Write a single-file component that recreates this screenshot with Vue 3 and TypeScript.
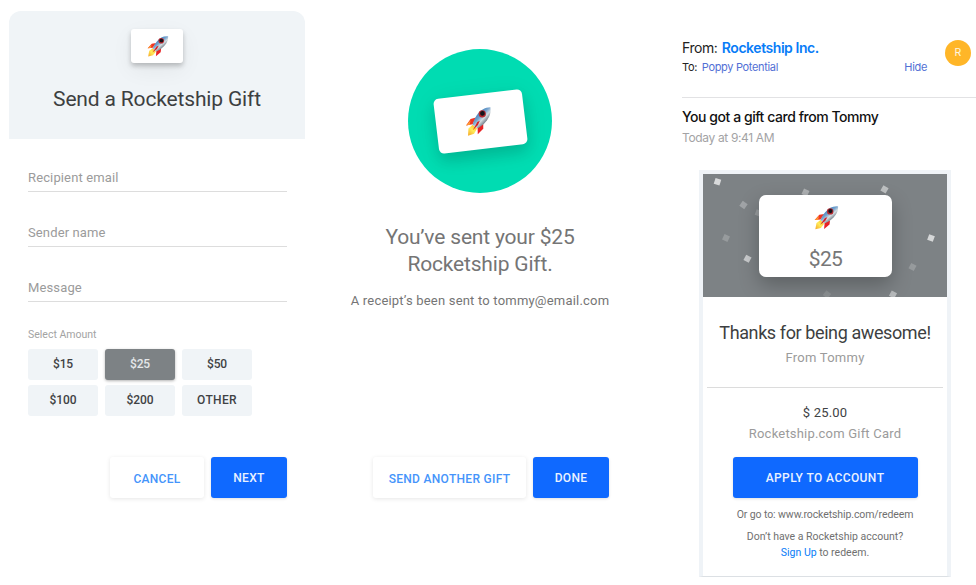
<script setup lang="ts">
import { ref, defineComponent, h } from 'vue'

interface Confetto {
  x: number
  y: number
  r: number
  o: number
}

const fields: string[] = ['Recipient email', 'Sender name', 'Message']
const amounts: string[] = ['$15', '$25', '$50', '$100', '$200', 'OTHER']
const selected = ref<string>('$25')

const confetti: Confetto[] = [
  { x: 14.5, y: 7.8, r: 18, o: 0.7 },
  { x: 40.5, y: 31, r: 35, o: 0.28 },
  { x: 55.5, y: 39, r: 20, o: 0.2 },
  { x: 102.5, y: 18.5, r: 25, o: 0.38 },
  { x: 181.5, y: 15.3, r: 30, o: 0.5 },
  { x: 23, y: 64, r: 25, o: 0.2 },
  { x: 44.5, y: 84.7, r: 28, o: 0.58 },
  { x: 228, y: 64, r: 20, o: 0.68 },
  { x: 209.5, y: 93, r: 28, o: 0.2 },
  { x: 124, y: 120.5, r: 38, o: 0.12 },
  { x: 190, y: 120.5, r: 28, o: 0.45 },
]

const Rocket = defineComponent({
  name: 'RocketIcon',
  setup: () => () =>
    h('svg', { viewBox: '0 0 24 24' }, [
      h('defs', [
        h('linearGradient', { id: 'hull', x1: 0.25, y1: 0.2, x2: 0.75, y2: 0.8 }, [
          h('stop', { offset: '0', 'stop-color': '#2f78b8' }),
          h('stop', { offset: '.38', 'stop-color': '#79a5cf' }),
          h('stop', { offset: '.6', 'stop-color': '#d5dee2' }),
          h('stop', { offset: '1', 'stop-color': '#465461' }),
        ]),
        h('linearGradient', { id: 'flame', x1: 1, y1: 0, x2: 0, y2: 1 }, [
          h('stop', { offset: '0', 'stop-color': '#ffb21c' }),
          h('stop', { offset: '.5', 'stop-color': '#ffec5a' }),
          h('stop', { offset: '1', 'stop-color': '#f5a524' }),
        ]),
      ]),
      h('path', { d: 'M9.8 8.1 4.8 8.8 0.2 14l5.9-.5z', fill: '#f03422' }),
      h('path', { d: 'M4.7 9.8.2 14l3.3-.3z', fill: '#ff9b32' }),
      h('path', { d: 'M15.5 14.5 15 18.6 9.6 23l.6-6.5z', fill: '#e82224' }),
      h('path', { d: 'M6 14 2 16.9.8 23.3l5.6-1.2 3.1-4.4z', fill: 'url(#flame)' }),
      h('path', { d: 'M23.6.4C18.5-.2 14.2 2 10.7 6.2 8.7 8.6 7.1 11.2 6 14l3.8 3.6c4.4-1.4 8.9-4.8 11.6-9 1.6-2.5 2.3-5.2 2.2-8.2z', fill: 'url(#hull)' }),
      h('path', { d: 'M12.8 11.2 10.5 12 5.6 18.8l5.1-3.9z', fill: '#d51f25' }),
      h('circle', { cx: 15.7, cy: 5.4, r: 3.2, fill: '#b6282e' }),
      h('circle', { cx: 15.9, cy: 5.1, r: 2.1, fill: '#14151c' }),
    ]),
})
</script>

<template>
  <main class="board">
    <section class="compose">
      <header class="compose-head">
        <div class="mini-card"><Rocket class="rocket-sm" /></div>
        <h1>Send a Rocketship Gift</h1>
      </header>
      <form class="form" @submit.prevent>
        <div v-for="f in fields" :key="f" class="field">{{ f }}</div>
        <div class="amount-label">Select Amount</div>
        <div class="amounts">
          <button
            v-for="a in amounts"
            :key="a"
            type="button"
            class="amount"
            :class="{ active: a === selected, word: a === 'OTHER' }"
            @click="selected = a"
          >{{ a }}</button>
        </div>
        <div class="actions">
          <button type="button" class="btn ghost cancel">CANCEL</button>
          <button type="button" class="btn primary">NEXT</button>
        </div>
      </form>
    </section>

    <section class="sent">
      <div class="disc"><div class="tilt-card"><Rocket class="rocket-md" /></div></div>
      <h2>You’ve sent your $25<br />Rocketship Gift.</h2>
      <p class="receipt">A receipt’s been sent to tommy@email.com</p>
      <div class="sent-actions">
        <button type="button" class="btn ghost another">SEND ANOTHER GIFT</button>
        <button type="button" class="btn primary">DONE</button>
      </div>
    </section>

    <section class="mail">
      <header class="mail-head">
        <div class="people">
          <div class="from">From: <b>Rocketship Inc.</b></div>
          <div class="to"><span>To: <a>Poppy Potential</a></span><a class="hide">Hide</a></div>
        </div>
        <div class="avatar">R</div>
      </header>
      <div class="subject">You got a gift card from Tommy</div>
      <div class="time">Today at 9:41 AM</div>

      <article class="gift">
        <div class="banner">
          <svg class="confetti" viewBox="0 0 244 123">
            <rect
              v-for="(c, i) in confetti"
              :key="i"
              :x="c.x - 3"
              :y="c.y - 3"
              width="6"
              height="6"
              fill="#fff"
              :fill-opacity="c.o"
              :transform="`rotate(${c.r} ${c.x} ${c.y})`"
            />
          </svg>
          <div class="value-card">
            <Rocket class="rocket-lg" />
            <span class="value">$25</span>
          </div>
        </div>
        <div class="gift-top">
          <div class="thanks">Thanks for being awesome!</div>
          <div class="sender">From Tommy</div>
        </div>
        <div class="gift-body">
          <div class="price">$ 25.00</div>
          <div class="product">Rocketship.com Gift Card</div>
          <button type="button" class="btn primary apply">APPLY TO ACCOUNT</button>
          <div class="small goto">Or go to: www.rocketship.com/redeem</div>
          <div class="small">Don’t have a Rocketship account?</div>
          <div class="small signup"><a>Sign Up</a> to redeem.</div>
        </div>
      </article>
    </section>
  </main>
</template>

<style>
body {
  background: #fff;
}
</style>

<style scoped>
* {
  box-sizing: border-box;
}
.board {
  width: 976px;
  height: 585px;
  overflow: hidden;
  display: grid;
  grid-template-columns: 296px 350px 321px;
  padding-left: 9px;
  font-family: Roboto, "Liberation Sans", sans-serif;
  white-space: nowrap;
  background: #fff;
}
h1,
h2,
p {
  margin: 0;
  font-weight: 400;
}
button {
  font: inherit;
  border: 0;
  padding: 0;
}
.compose {
  padding-top: 11px;
}
.compose-head {
  height: 128px;
  background: #f0f4f7;
  border-radius: 12px 12px 0 0;
  display: flex;
  flex-direction: column;
  align-items: center;
  padding-top: 18px;
}
.mini-card {
  width: 52px;
  height: 34px;
  border-radius: 3px;
  background: #fff;
  display: flex;
  align-items: center;
  justify-content: center;
  box-shadow: 0 3px 5px rgba(0, 0, 0, 0.22), 0 7px 22px rgba(0, 0, 0, 0.06);
}
.rocket-sm {
  width: 22px;
  height: 21px;
  margin-left: 2px;
}
h1 {
  margin-top: 20px;
  font-size: 21px;
  line-height: 32px;
  letter-spacing: -0.16px;
  color: #3d3f41;
}
.form {
  padding: 25px 18px 0 19px;
}
.field {
  height: 28px;
  margin-bottom: 27px;
  border-bottom: 1px solid #ddd;
  font-size: 13px;
  line-height: 28px;
  letter-spacing: 0.13px;
  color: #9b9b9b;
}
.amount-label {
  margin-top: -3px;
  height: 23px;
  font-size: 10.5px;
  line-height: 18px;
  color: #a3a3a3;
}
.amounts {
  display: grid;
  grid-template-columns: repeat(3, 70px);
  grid-auto-rows: 31px;
  column-gap: 7px;
  row-gap: 5px;
}
.amount {
  background: #f0f4f7;
  border-radius: 3px;
  font-size: 12px;
  font-weight: 500;
  letter-spacing: -0.1px;
  padding-bottom: 1px;
  color: #404244;
}
.amount.word {
  letter-spacing: 0.35px;
}
.amount.active {
  background: #7d8285;
  color: #e5e8ea;
  box-shadow: 0 1px 3px rgba(0, 0, 0, 0.3);
}
.actions {
  display: flex;
  justify-content: flex-end;
  gap: 7px;
  margin-top: 41px;
}
.btn {
  height: 41px;
  width: 76px;
  border-radius: 3px;
  font-size: 12px;
  font-weight: 500;
  letter-spacing: 0.3px;
}
.primary {
  background: #0f69ff;
  color: #eaf2ff;
  box-shadow: 0 1px 3px rgba(0, 0, 0, 0.12);
}
.ghost {
  background: #fff;
  color: #4594fb;
  box-shadow: 0 1px 4px rgba(0, 0, 0, 0.1);
  padding-top: 2px;
}
.cancel {
  width: 94px;
}
.another {
  width: 153px;
}
.sent {
  display: flex;
  flex-direction: column;
  align-items: center;
  padding-top: 49px;
}
.disc {
  width: 144px;
  height: 144px;
  border-radius: 50%;
  background: #00dcb2;
  display: flex;
  align-items: center;
  justify-content: center;
}
.tilt-card {
  width: 89px;
  height: 55px;
  border-radius: 5px;
  background: #fff;
  transform: rotate(-6.8deg);
  display: flex;
  align-items: center;
  justify-content: center;
  box-shadow: 0 8px 14px rgba(0, 0, 0, 0.12), 0 4px 24px rgba(0, 0, 0, 0.08);
}
.rocket-md {
  width: 28px;
  height: 27px;
  margin-right: 3px;
}
h2 {
  margin-top: 31px;
  text-align: center;
  font-size: 21px;
  line-height: 27px;
  letter-spacing: -0.18px;
  color: #757575;
}
.receipt {
  margin-top: 14px;
  font-size: 13px;
  line-height: 18px;
  letter-spacing: 0.2px;
  color: #757575;
}
.sent-actions {
  display: flex;
  gap: 7px;
  margin-top: 147px;
  margin-left: 22px;
}
.mail {
  padding: 36px 0 0 27px;
  font-family: Inter, "Liberation Sans", sans-serif;
}
.mail-head {
  height: 62px;
  display: flex;
  border-bottom: 1px solid #e2e2e4;
}
.people {
  width: 245px;
}
.from {
  font-size: 14px;
  line-height: 24px;
  letter-spacing: -0.45px;
  color: #222;
}
.from b {
  font-weight: 600;
  margin-left: 1px;
  color: #087cf7;
}
.to {
  display: flex;
  justify-content: space-between;
  font-size: 11px;
  line-height: 14px;
  letter-spacing: -0.33px;
  color: #222;
}
.to a {
  color: #526fd5;
  margin-left: 2px;
}
.avatar {
  width: 26px;
  height: 26px;
  margin: 4px 0 0 18px;
  border-radius: 50%;
  background: #ffb628;
  color: #fff6e2;
  font-size: 10.5px;
  line-height: 26px;
  text-align: center;
}
.subject {
  margin-top: 8px;
  font-size: 14px;
  font-weight: 500;
  line-height: 22px;
  letter-spacing: -0.45px;
  color: #111;
}
.time {
  font-size: 12px;
  line-height: 20px;
  letter-spacing: -0.35px;
  color: #a3a3a5;
}
.gift {
  width: 252px;
  height: 407px;
  margin: 22px 0 0 17px;
  border: 4px solid #eff3f7;
  border-bottom: 1px solid #dce0e4;
  background: #fff;
  font-family: Roboto, "Liberation Sans", sans-serif;
  text-align: center;
}
.banner {
  position: relative;
  height: 123px;
  background: #7d8285;
  padding: 21px 0 0 56px;
  overflow: hidden;
}
.confetti {
  position: absolute;
  inset: 0;
  width: 244px;
  height: 123px;
}
.value-card {
  position: relative;
  width: 133px;
  height: 82px;
  border-radius: 7px;
  background: #fff;
  display: flex;
  flex-direction: column;
  align-items: center;
  padding-top: 11px;
  box-shadow: 0 8px 20px rgba(0, 0, 0, 0.26);
}
.rocket-lg {
  width: 25px;
  height: 24px;
  margin-left: 2px;
}
.value {
  margin-top: 16px;
  font-size: 21px;
  line-height: 26px;
  letter-spacing: -0.7px;
  color: #777;
}
.gift-top {
  height: 91px;
  margin: 0 4px;
  padding-top: 23px;
  border-bottom: 1px solid #dcdcdc;
}
.thanks {
  font-size: 18px;
  line-height: 26px;
  letter-spacing: -0.4px;
  color: #3d3f41;
}
.sender {
  font-size: 13px;
  line-height: 24px;
  letter-spacing: 0.25px;
  color: #9b9b9b;
}
.gift-body {
  display: flex;
  flex-direction: column;
  align-items: center;
  padding-top: 14px;
}
.price {
  font-size: 13px;
  line-height: 21px;
  letter-spacing: 0.2px;
  color: #404244;
}
.product {
  font-size: 13px;
  line-height: 22px;
  letter-spacing: 0.2px;
  color: #9b9b9b;
}
.apply {
  width: 185px;
  margin-top: 12px;
  letter-spacing: 0.42px;
}
.small {
  font-size: 10.5px;
  line-height: 16px;
  color: #707070;
}
.goto {
  margin: 9px 0 6px;
  letter-spacing: -0.1px;
}
.small a {
  color: #087cf7;
}
</style>
